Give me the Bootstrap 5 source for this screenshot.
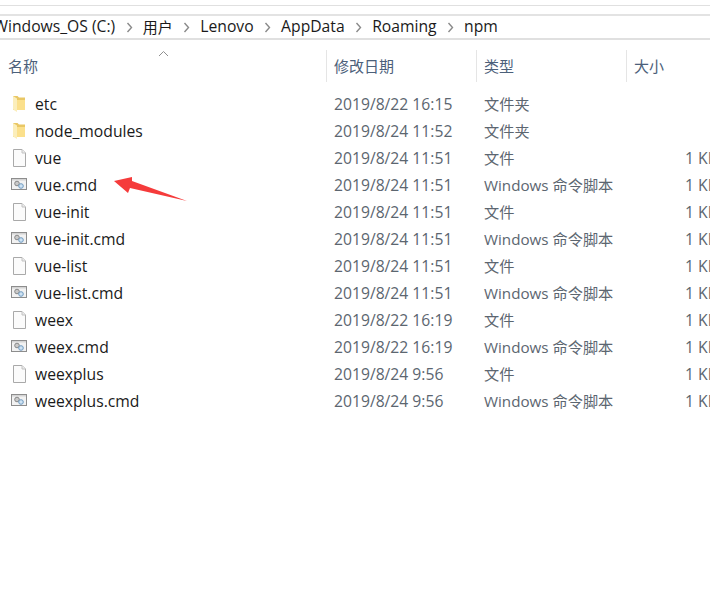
<!DOCTYPE html>
<html lang="zh">
<head>
    <meta charset="utf-8">
    <title>npm</title>
    <link href="https://cdn.jsdelivr.net/npm/bootstrap@5.3.0/dist/css/bootstrap.min.css" rel="stylesheet">
    <style>
        html, body { height: 100%; }
        body { background: #fff; overflow: hidden; position: relative; font-family: "Open Sans", "Noto Sans CJK SC", sans-serif; font-size: 15.7px; color: #1a1a1a; }
        .top-strip { height: 9px; margin-top: 5px; border-top: 1px solid #e0e0e0; }
        .crumbs { height: 26px; border-top: 2px solid #e3e3e3; border-bottom: 2px solid #e0e0e0; white-space: nowrap; }
        .crumb-first { margin-left: -6.5px; }
        .crumb-sep { width: 27.5px; }
        .crumb-sep svg { display: block; }
        .crumb-zh { font-size: 15px; }
        .head-row { height: 32px; margin-top: 10px; position: relative; color: #4c607a; font-size: 15px; }
        .head-cell { border-left: 1px solid #e5e5e5; padding-left: 7px; line-height: 32px; }
        .sort-up { position: absolute; left: 158px; top: 0; }
        .file-list { margin-top: 9px; }
        .file-row { height: 27px; line-height: 27px; white-space: nowrap; }
        .col-name { width: 326px; flex: none; padding-left: 35px; position: relative; color: #1a1a1a; }
        .col-name svg { position: absolute; left: 10px; top: 0; }
        .col-date { width: 150px; flex: none; padding-left: 8px; color: #5c6670; }
        .col-type { width: 150px; flex: none; padding-left: 8px; color: #5c6670; font-size: 15.2px; }
        .col-size { flex: 1; padding-left: 59px; color: #5c6670; }
        .head-name { width: 326px; flex: none; padding-left: 8px; line-height: 32px; }
        .head-date, .head-type { width: 150px; flex: none; }
        .head-size { flex: 1; }
        .red-arrow { position: absolute; left: 110px; top: 174px; }
    </style>
</head>
<body>
    <div class="top-strip"></div>
    <div class="crumbs d-flex align-items-center" id="crumbs"></div>

    <div class="head-row d-flex">
        <svg class="sort-up" width="11" height="7" viewBox="0 0 11 7"><path d="M1 6l4.500-4.500L10 6" fill="none" stroke="#8f8f8f"/></svg>
        <div class="head-name">名称</div>
        <div class="head-cell head-date">修改日期</div>
        <div class="head-cell head-type">类型</div>
        <div class="head-cell head-size">大小</div>
    </div>

    <div class="file-list" id="fileList"></div>

    <svg class="red-arrow" width="80" height="30" viewBox="0 0 80 30"><path d="M4 7L22 3 22 7 77 27 20 14 18 19z" fill="#f53b3b"/></svg>

    <script>
        const folderIcon = '<svg width="18" height="27" viewBox="0 0 18 27"><path d="M3 5h4.500l1.500 1.500h6V19H3z" fill="#e9c765"/><path d="M3 5l4 2.500V21l-4-2.500z" fill="#fbeebb"/><path d="M7 9h8v10H7z" fill="#fbe08c"/></svg>';
        const fileIcon = '<svg width="18" height="27" viewBox="0 0 18 27"><path d="M3.500 4.500H12L15.500 8V21.500H3.500z" fill="#fbfbfb" stroke="#a9a9a9"/><path d="M12 4.500V8h3.500" fill="#ececec" stroke="#c2c2c2"/></svg>';
        const cmdIcon = '<svg width="18" height="27" viewBox="0 0 18 27"><rect x="1.500" y="6.500" width="15" height="11" fill="#f2f2f2" stroke="#8d8d8d"/><path d="M2 7h14v1.500H2z" fill="#d4d4d4"/><circle cx="7" cy="11.500" r="2.300" fill="#c9c9c9" stroke="#888"/><circle cx="11" cy="14" r="2.300" fill="#cfe3f3" stroke="#6f9ac0"/></svg>';
        const chevron = '<span class="crumb-sep d-flex justify-content-center"><svg width="7" height="11" viewBox="0 0 7 11"><path d="M1.500 1l4 4.500-4 4.500" fill="none" stroke="#8a8a8a" stroke-width="1.400"/></svg></span>';

        document.getElementById('crumbs').innerHTML = [
            '<span class="crumb-first">Windows_OS (C:)</span>',
            '<span class="crumb-zh">用户</span>',
            '<span>Lenovo</span>',
            '<span>AppData</span>',
            '<span>Roaming</span>',
            '<span>npm</span>'
        ].join(chevron);

        const files = [
            ['etc', '2019/8/22 16:15', '文件夹', '', folderIcon],
            ['node_modules', '2019/8/24 11:52', '文件夹', '', folderIcon],
            ['vue', '2019/8/24 11:51', '文件', '1 KB', fileIcon],
            ['vue.cmd', '2019/8/24 11:51', 'Windows 命令脚本', '1 KB', cmdIcon],
            ['vue-init', '2019/8/24 11:51', '文件', '1 KB', fileIcon],
            ['vue-init.cmd', '2019/8/24 11:51', 'Windows 命令脚本', '1 KB', cmdIcon],
            ['vue-list', '2019/8/24 11:51', '文件', '1 KB', fileIcon],
            ['vue-list.cmd', '2019/8/24 11:51', 'Windows 命令脚本', '1 KB', cmdIcon],
            ['weex', '2019/8/22 16:19', '文件', '1 KB', fileIcon],
            ['weex.cmd', '2019/8/22 16:19', 'Windows 命令脚本', '1 KB', cmdIcon],
            ['weexplus', '2019/8/24 9:56', '文件', '1 KB', fileIcon],
            ['weexplus.cmd', '2019/8/24 9:56', 'Windows 命令脚本', '1 KB', cmdIcon]
        ];

        document.getElementById('fileList').innerHTML = files.map(f => `
            <div class="file-row d-flex">
                <div class="col-name">${f[4]}${f[0]}</div>
                <div class="col-date">${f[1]}</div>
                <div class="col-type">${f[2]}</div>
                <div class="col-size">${f[3]}</div>
            </div>`).join('');
    </script>
    <script src="https://cdn.jsdelivr.net/npm/bootstrap@5.3.0/dist/js/bootstrap.bundle.min.js"></script>
</body>
</html>
